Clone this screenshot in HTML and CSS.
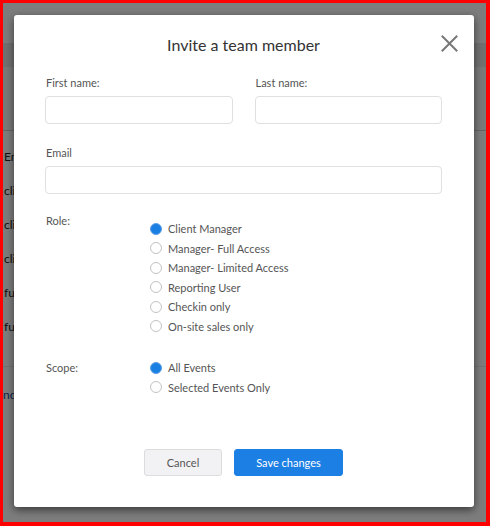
FILE: index.html
```html
<!DOCTYPE html>
<html>
<head>
<meta charset="utf-8">
<link rel="stylesheet" href="styles.css">
</head>
<body>
<div class="frame">
  <div class="page">
    <div class="topbar"></div>
    <div class="subbar"></div>
    <div class="toolbar"></div>
    <div class="table">
      <div class="row">Em</div>
      <div class="row">cli</div>
      <div class="row">cli</div>
      <div class="row">cli</div>
      <div class="row">ful</div>
      <div class="row">ful</div>
    </div>
    <div class="pager"><span class="link">nd</span></div>
  </div>
  <div class="overlay"></div>
  <div class="modal">
    <div class="modal-header">
      <h2 class="title">Invite a team member</h2>
      <button class="close" aria-label="Close">
        <svg width="17" height="17" viewBox="0 0 17 17"><path d="M1.5 1.5 L15.5 15.5 M15.5 1.5 L1.5 15.5" stroke="#777" stroke-width="2" fill="none" stroke-linecap="square"/></svg>
      </button>
    </div>
    <div class="name-row">
      <div class="field">
        <label class="label">First name:</label>
        <div class="input"></div>
      </div>
      <div class="field">
        <label class="label">Last name:</label>
        <div class="input"></div>
      </div>
    </div>
    <div class="field email">
      <label class="label">Email</label>
      <div class="input"></div>
    </div>
    <div class="choice-row role">
      <div class="label choice-label">Role:</div>
      <div class="options">
        <div class="option"><span class="radio checked"></span>Client Manager</div>
        <div class="option"><span class="radio"></span>Manager- Full Access</div>
        <div class="option"><span class="radio"></span>Manager- Limited Access</div>
        <div class="option"><span class="radio"></span>Reporting User</div>
        <div class="option"><span class="radio"></span>Checkin only</div>
        <div class="option"><span class="radio"></span>On-site sales only</div>
      </div>
    </div>
    <div class="choice-row scope">
      <div class="label choice-label">Scope:</div>
      <div class="options">
        <div class="option"><span class="radio checked"></span>All Events</div>
        <div class="option"><span class="radio"></span>Selected Events Only</div>
      </div>
    </div>
    <div class="footer">
      <button class="btn btn-cancel">Cancel</button>
      <button class="btn btn-save">Save changes</button>
    </div>
  </div>
</div>
</body>
</html>
```

FILE: styles.css
```css
* { box-sizing: border-box; }
html, body { margin: 0; padding: 0; }
body {
  font-family: Lato, "Open Sans", sans-serif;
  background: #fff;
}
.frame {
  position: relative;
  width: 490px;
  height: 526px;
  border-style: solid;
  border-color: #ff0000;
  border-width: 3px 4px 4px 3px;
  overflow: hidden;
}
.page {
  width: 100%;
  height: 100%;
  background: #fbfbfb;
}
.topbar { height: 40px; background: #fafafa; }
.subbar { height: 24px; background: #e2e2e2; }
.toolbar { height: 64px; background: #f3f3f3; border-bottom: 1px solid #c8c8c8; }
.table { padding-top: 9px; }
.row {
  height: 34px;
  line-height: 34px;
  font-size: 12px;
  color: #222;
  padding-left: 1px;
  white-space: nowrap;
}
.pager {
  margin-top: 22px;
  border-top: 1px solid #e4e4e4;
  padding-top: 21px;
  font-size: 12px;
  line-height: 14px;
}
.link { color: #1c4f9c; }
.overlay {
  position: absolute;
  inset: 0;
  background: rgba(0, 0, 0, 0.5);
}
.modal {
  position: absolute;
  top: 12px;
  left: 11px;
  width: 460px;
  height: 492px;
  background: #fff;
  border-radius: 3px;
  box-shadow: 0 3px 9px rgba(0, 0, 0, 0.55);
  padding: 20px 32px 0 31px;
}
.modal-header {
  position: relative;
  height: 20px;
}
.title {
  margin: 0;
  text-align: center;
  font-size: 16px;
  line-height: 20px;
  font-weight: 400;
  color: #333;
}
.close {
  position: absolute;
  top: 0;
  right: -16px;
  width: 17px;
  height: 17px;
  padding: 0;
  border: 0;
  background: none;
  display: block;
}
.close svg { display: block; }
.name-row {
  display: grid;
  grid-template-columns: 1fr 1fr;
  column-gap: 22px;
  margin-top: 21px;
}
.field { display: flex; flex-direction: column; }
.label {
  font-size: 11px;
  line-height: 14px;
  color: #555;
  padding-left: 1px;
}
.input {
  margin-top: 6px;
  height: 28px;
  border: 1px solid #e0e0e0;
  border-radius: 4px;
  background: #fff;
}
.email { margin-top: 22px; }
.choice-row {
  display: grid;
  grid-template-columns: 105px 1fr;
}
.role { margin-top: 17px; }
.role .options { padding-top: 8px; }
.scope { margin-top: 22px; }
.choice-label { line-height: 19.5px; }
.options { display: flex; flex-direction: column; }
.option {
  display: flex;
  align-items: center;
  height: 19.5px;
  font-size: 11px;
  color: #555;
}
.radio {
  width: 12px;
  height: 12px;
  border-radius: 50%;
  border: 1px solid #c2c2c2;
  background: #fff;
  margin-right: 6px;
  flex: none;
}
.radio.checked {
  background: #1a7fe2;
  border-color: #5d9fe6;
}
.footer {
  display: flex;
  justify-content: center;
  gap: 12px;
  margin-top: 52px;
}
.btn {
  height: 27px;
  border-radius: 3px;
  font-family: Lato, "Open Sans", sans-serif;
  font-size: 11px;
  padding: 0;
}
.btn-cancel {
  width: 78px;
  background: #f2f2f4;
  border: 1px solid #dcdcdc;
  color: #555;
}
.btn-save {
  width: 109px;
  background: #1c7fe4;
  border: 1px solid #1c7fe4;
  color: #fff;
}
```
